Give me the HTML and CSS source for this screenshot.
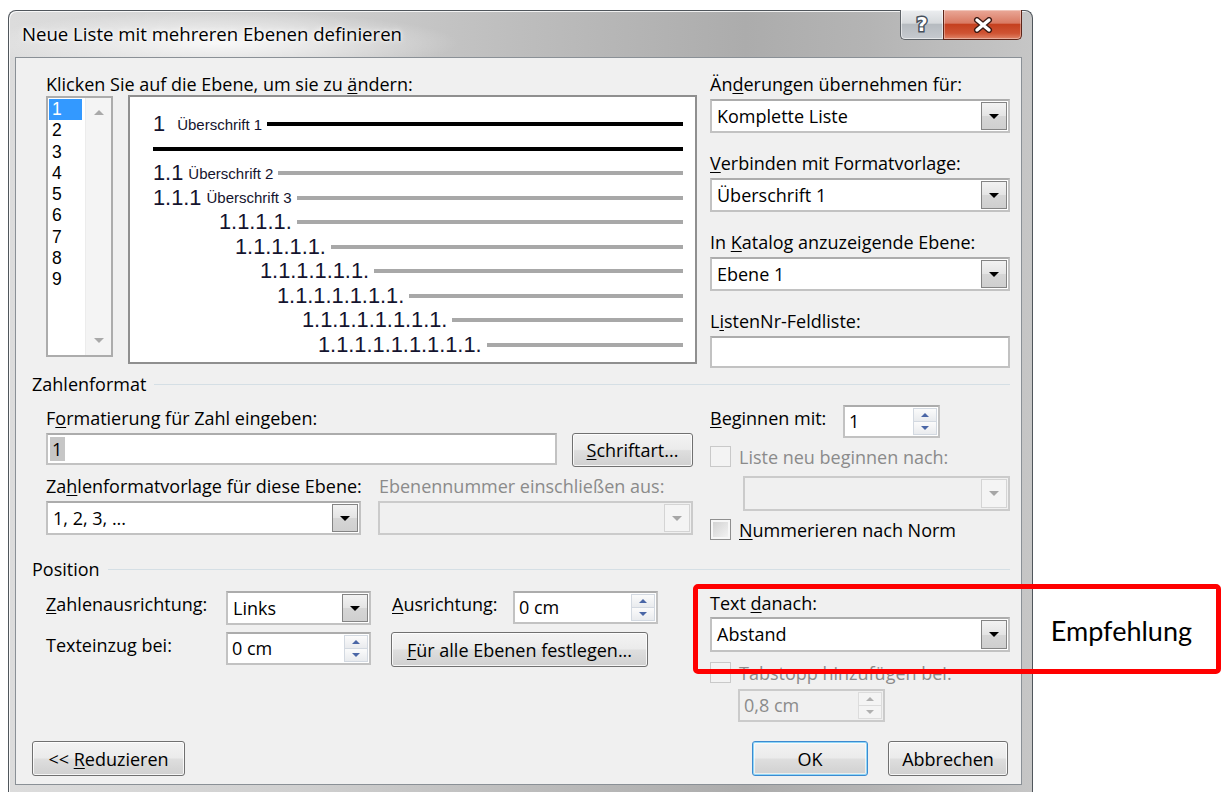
FILE: index.html
```html
<!DOCTYPE html>
<html lang="de">
<head>
<meta charset="utf-8">
<title>Neue Liste mit mehreren Ebenen definieren</title>
<link rel="stylesheet" href="styles.css">
</head>
<body>
<div class="window">
  <div class="titlebar">
    <div class="title">Neue Liste mit mehreren Ebenen definieren</div>
    <div class="caption-buttons">
      <div class="cap-btn cap-help"><span>?</span></div>
      <div class="cap-btn cap-close">
        <svg width="22" height="16" viewBox="0 0 22 16">
          <path d="M5 3 L17 13 M17 3 L5 13" stroke="#3b1a14" stroke-width="6" stroke-linecap="round"/>
          <path d="M5 3 L17 13 M17 3 L5 13" stroke="#ffffff" stroke-width="3.4" stroke-linecap="round"/>
        </svg>
      </div>
    </div>
  </div>

  <div class="client">
    <!-- level picker, preview and list-wide options -->
    <div class="top">
      <div class="levels-col">
        <div class="label">Klicken Sie auf die Ebene, um sie zu <u>ä</u>ndern:</div>
        <div class="levels-row">
          <div class="level-list">
            <ul class="level-items">
              <li class="sel">1</li><li>2</li><li>3</li><li>4</li><li>5</li><li>6</li><li>7</li><li>8</li><li>9</li>
            </ul>
            <div class="vscroll"><span class="sarrow up"></span><span class="sarrow down"></span></div>
          </div>
          <div class="preview">
            <div class="pv-row l1"><span class="pv-num">1</span><span class="pv-name first">Überschrift 1</span><span class="pv-line dark"></span></div>
            <div class="pv-row l1"><span class="pv-line dark flush"></span></div>
            <div class="pv-row l2"><span class="pv-num">1.1</span><span class="pv-name">Überschrift 2</span><span class="pv-line"></span></div>
            <div class="pv-row l3"><span class="pv-num">1.1.1</span><span class="pv-name">Überschrift 3</span><span class="pv-line"></span></div>
            <div class="pv-row l4"><span class="pv-num">1.1.1.1.</span><span class="pv-line"></span></div>
            <div class="pv-row l5"><span class="pv-num">1.1.1.1.1.</span><span class="pv-line"></span></div>
            <div class="pv-row l6"><span class="pv-num">1.1.1.1.1.1.</span><span class="pv-line"></span></div>
            <div class="pv-row l7"><span class="pv-num">1.1.1.1.1.1.1.</span><span class="pv-line"></span></div>
            <div class="pv-row l8"><span class="pv-num">1.1.1.1.1.1.1.1.</span><span class="pv-line"></span></div>
            <div class="pv-row l9"><span class="pv-num">1.1.1.1.1.1.1.1.1.</span><span class="pv-line"></span></div>
          </div>
        </div>
      </div>

      <div class="side-col">
        <div class="field">
          <div class="label">Än<u>d</u>erungen übernehmen für:</div>
          <div class="combo"><span class="combo-value">Komplette Liste</span><span class="combo-btn"><i class="tri"></i></span></div>
        </div>
        <div class="field">
          <div class="label"><u>V</u>erbinden mit Formatvorlage:</div>
          <div class="combo"><span class="combo-value">Überschrift 1</span><span class="combo-btn"><i class="tri"></i></span></div>
        </div>
        <div class="field">
          <div class="label">In <u>K</u>atalog anzuzeigende Ebene:</div>
          <div class="combo"><span class="combo-value">Ebene 1</span><span class="combo-btn"><i class="tri"></i></span></div>
        </div>
        <div class="field">
          <div class="label">L<u>i</u>stenNr-Feldliste:</div>
          <div class="textbox tall"></div>
        </div>
      </div>
    </div>

    <!-- number format group -->
    <div class="group-head nf-head"><span>Zahlenformat</span><span class="rule"></span></div>
    <div class="numfmt">
      <div class="nf-left">
        <div class="label">F<u>o</u>rmatierung für Zahl eingeben:</div>
        <div class="nf-row1">
          <div class="textbox fmt-input"><span class="hl">1</span></div>
          <button class="btn btn-font"><span><u>S</u>chriftart...</span></button>
        </div>
        <div class="nf-labels">
          <div class="label">Za<u>h</u>lenformatvorlage für diese Ebene:</div>
          <div class="label disabled">Ebenennummer einschließen aus:</div>
        </div>
        <div class="nf-row2">
          <div class="combo half"><span class="combo-value">1, 2, 3, ...</span><span class="combo-btn"><i class="tri"></i></span></div>
          <div class="combo half disabled"><span class="combo-value"></span><span class="combo-btn"><i class="tri"></i></span></div>
        </div>
      </div>

      <div class="nf-right">
        <div class="start-row">
          <div class="label start-label"><u>B</u>eginnen mit:</div>
          <div class="spin start-spin"><span class="spin-value">1</span><span class="spin-btns"><span class="sb"><i class="stri up"></i></span><span class="sb"><i class="stri down"></i></span></span></div>
        </div>
        <div class="check disabled restart"><span class="cbox"></span><span>Liste neu beginnen nach:</span></div>
        <div class="combo disabled restart-combo"><span class="combo-value"></span><span class="combo-btn"><i class="tri"></i></span></div>
        <div class="check legal"><span class="cbox"></span><span><u>N</u>ummerieren nach Norm</span></div>
      </div>
    </div>

    <!-- position group -->
    <div class="group-head pos-head"><span>Position</span><span class="rule"></span></div>
    <div class="position">
      <div class="pos-grid">
        <div class="label glabel"><u>Z</u>ahlenausrichtung:</div>
        <div class="combo align-combo"><span class="combo-value">Links</span><span class="combo-btn"><i class="tri"></i></span></div>
        <div class="label glabel col4"><u>A</u>usrichtung:</div>
        <div class="spin pos-spin"><span class="spin-value">0 cm</span><span class="spin-btns"><span class="sb"><i class="stri up"></i></span><span class="sb"><i class="stri down"></i></span></span></div>
        <div class="label glabel">Texteinzu<u>g</u> bei:</div>
        <div class="spin pos-spin"><span class="spin-value">0 cm</span><span class="spin-btns"><span class="sb"><i class="stri up"></i></span><span class="sb"><i class="stri down"></i></span></span></div>
        <button class="btn btn-all"><span><u>F</u>ür alle Ebenen festlegen...</span></button>
      </div>

      <div class="pos-right">
        <div class="label">Text <u>d</u>anach:</div>
        <div class="combo after-combo"><span class="combo-value">Abstand</span><span class="combo-btn"><i class="tri"></i></span></div>
        <div class="check disabled tabcheck"><span class="cbox"></span><span>Tabstopp hinzufügen bei:</span></div>
        <div class="spin disabled tab-spin"><span class="spin-value">0,8 cm</span><span class="spin-btns"><span class="sb"><i class="stri up"></i></span><span class="sb"><i class="stri down"></i></span></span></div>
      </div>
    </div>

    <!-- dialog buttons -->
    <div class="footer">
      <button class="btn btn-less"><span>&lt;&lt; <u>R</u>eduzieren</span></button>
      <div class="footer-right">
        <button class="btn btn-ok"><span>OK</span></button>
        <button class="btn btn-cancel"><span>Abbrechen</span></button>
      </div>
    </div>
  </div>
</div>

<div class="callout"><span class="callout-text">Empfehlung</span></div>
</body>
</html>
```

FILE: styles.css
```css
* { box-sizing: border-box; }

html, body { margin: 0; }

body {
  position: relative;
  width: 1226px;
  height: 792px;
  overflow: hidden;
  background: #ffffff;
  font-family: "Open Sans", "Noto Sans", "DejaVu Sans", sans-serif;
  font-size: 18px;
  line-height: 20px;
  color: #000;
}

u { text-decoration: underline; text-decoration-thickness: 1px; text-underline-offset: 2px; }

/* ---------- window frame ---------- */
.window {
  margin: 10px 0 0 8px;
  width: 1025px;
  height: 782px;
  padding: 0 10px 7px 6px;
  display: flex;
  flex-direction: column;
  border: 1px solid #50565c;
  border-bottom: 0;
  border-radius: 8px 8px 0 0;
  background:
    radial-gradient(ellipse 320px 42px at 210px 32px, rgba(255,255,255,.85), rgba(255,255,255,0) 75%),
    linear-gradient(to right, #dcdcdc 0%, #d0d0d0 28%, #bdbdbd 50%, #acacac 72%, #b4b4b4 84%, #c6c6c6 100%);
  box-shadow: inset 1px 1px 0 rgba(255,255,255,.8);
}

.titlebar {
  flex: none;
  height: 46px;
  display: flex;
  justify-content: space-between;
  align-items: flex-start;
}

.title {
  padding: 13px 0 0 7px;
  font-size: 18.6px;
  line-height: 20px;
  color: #000;
  text-shadow: 0 0 6px #fff, 0 0 3px #fff;
}

.caption-buttons { display: flex; margin-top: -1px; }

.cap-btn {
  height: 30px;
  display: flex;
  align-items: center;
  justify-content: center;
  border: 1px solid #5e6368;
  border-top: 0;
}

.cap-help {
  width: 43px;
  border-right: 0;
  border-radius: 0 0 0 5px;
  background: linear-gradient(#eceef0, #d6d9dc 45%, #b6bbc0 50%, #c6cacf 100%);
  box-shadow: inset 0 0 0 1px rgba(255,255,255,.55);
}

.cap-help span {
  font: bold 19px/1 "DejaVu Sans", sans-serif;
  color: #fff;
  -webkit-text-stroke: 3px #46505c;
  paint-order: stroke fill;
}

.cap-close {
  width: 79px;
  border-color: #5d2418;
  border-radius: 0 0 5px 0;
  background: linear-gradient(#eaa898, #d97a63 45%, #c5401f 50%, #cf5333 80%, #e08468 100%);
  box-shadow: inset 0 0 0 1px rgba(255,255,255,.35);
}

/* ---------- client area ---------- */
.client {
  flex: none;
  height: 728px;
  border: 1px solid #8a9096;
  background: #f0f0f0;
  display: flex;
  flex-direction: column;
}

.label { height: 20px; line-height: 20px; white-space: nowrap; }
.disabled, .label.disabled { color: #8b8b8b; }

/* ---------- top: levels + preview + options ---------- */
.top { display: flex; margin: 16px 0 0 30px; }

.levels-col { width: 651px; }

.levels-row { display: flex; margin-top: 1px; }

.level-list {
  width: 67px;
  height: 261px;
  margin-top: 1px;
  display: flex;
  border: 2px solid #acacac;
  background: #fff;
  padding: 1px 0 0 1px;
}

.level-items { list-style: none; margin: 0; padding: 0; width: 33px; }

.level-items li {
  height: 21.3px;
  line-height: 21px;
  padding-left: 3px;
  font-family: "Liberation Sans", Arial, sans-serif;
  font-size: 17.5px;
}

.level-items li.sel { background: #3399ff; color: #fff; }

.vscroll {
  margin: -1px 0 0 auto;
  width: 26px;
  height: 257px;
  background: #f4f4f4;
  border-left: 1px solid #ececec;
  display: flex;
  flex-direction: column;
  align-items: center;
  justify-content: space-between;
  padding: 12px 0 12px;
}

.sarrow { width: 0; height: 0; border-left: 5px solid transparent; border-right: 5px solid transparent; }
.sarrow.up { border-bottom: 5px solid #a9a9a9; }
.sarrow.down { border-top: 5px solid #a9a9a9; }

.preview {
  width: 569px;
  height: 269px;
  margin-left: 15px;
  border: 2px solid #8f8f8f;
  background: #fff;
  padding: 15px 12px 0 0;
}

.pv-row {
  height: 24.5px;
  display: flex;
  align-items: center;
  font-family: "Liberation Sans", Arial, sans-serif;
  color: #14142e;
}

.pv-num { font-size: 21.8px; line-height: 1; white-space: nowrap; }
.pv-name { font-size: 15px; line-height: 1; margin-left: 5px; white-space: nowrap; }
.pv-name.first { margin-left: 12px; }
.pv-line { flex: 1; height: 4px; margin-left: 5px; background: #a8a8a8; }
.pv-line.dark { background: #000; }
.pv-line.flush { margin-left: 0; }

.l1, .l2, .l3 { padding-left: 23px; }
.l4 { padding-left: 89px; }
.l5 { padding-left: 105px; }
.l6 { padding-left: 130px; }
.l7 { padding-left: 147px; }
.l8 { padding-left: 172px; }
.l9 { padding-left: 188px; }

.side-col { width: 300px; margin-left: 13px; }
.field + .field { margin-top: 20px; }
.field .label + * { margin-top: 5px; }

/* ---------- controls ---------- */
.combo {
  height: 34px;
  display: flex;
  border: 2px solid #c2c2c2;
  border-top-color: #acacac;
  background: #fff;
}

.combo-value { flex: 1; padding-left: 5px; line-height: 30px; white-space: nowrap; }

.combo-btn {
  width: 26px;
  margin: 1px 1px 1px 0;
  border: 1px solid #848484;
  background: linear-gradient(#f2f2f2, #e4e4e4 50%, #d6d6d6 51%, #cfcfcf);
  display: flex;
  align-items: center;
  justify-content: center;
}

.tri { width: 0; height: 0; border-left: 5px solid transparent; border-right: 5px solid transparent; border-top: 5px solid #000; }

.combo.disabled { background: #f0f0f0; border-color: #cbcbcb; }
.combo.disabled .combo-btn { border-color: #d4d4d4; background: #f4f4f4; }
.combo.disabled .tri { border-top-color: #a6a6a6; }

.textbox {
  height: 32px;
  border: 2px solid #c2c2c2;
  border-top-color: #acacac;
  background: #fff;
}

.spin {
  display: flex;
  border: 2px solid #c2c2c2;
  border-top-color: #acacac;
  background: #fff;
}

.spin-value { flex: 1; padding-left: 4px; line-height: 29px; white-space: nowrap; }

.spin-btns { width: 24px; display: flex; flex-direction: column; margin: 1px; }

.sb {
  flex: 1;
  display: flex;
  align-items: center;
  justify-content: center;
  border: 1px solid #d3d9e1;
  background: linear-gradient(#fbfbfb, #e9ebee);
}
.sb + .sb { border-top: 0; }

.stri { width: 0; height: 0; border-left: 4px solid transparent; border-right: 4px solid transparent; }
.stri.up { border-bottom: 4px solid #4a66a6; }
.stri.down { border-top: 4px solid #4a66a6; }

.spin.disabled { background: #f0f0f0; border-color: #cbcbcb; }
.spin.disabled .sb { border-color: #dcdcdc; background: #f4f4f4; }
.spin.disabled .stri.up { border-bottom-color: #b0b0b0; }
.spin.disabled .stri.down { border-top-color: #b0b0b0; }

.check { display: flex; align-items: center; height: 21px; white-space: nowrap; }

.cbox {
  width: 21px;
  height: 21px;
  margin-right: 8px;
  border: 1px solid #8f8f8f;
  background: linear-gradient(135deg, #cfcfcf, #f6f6f6);
  box-shadow: inset 0 0 0 2px #f7f7f7;
}

.check.disabled .cbox { border-color: #c9c9c9; background: #f3f3f3; box-shadow: none; }

.btn {
  font: inherit;
  color: #000;
  height: 35px;
  padding: 0;
  border: 1px solid #707070;
  border-radius: 3px;
  background: linear-gradient(#f3f3f3 0%, #ebebeb 48%, #dedede 52%, #d0d0d0 100%);
  box-shadow: inset 0 0 0 1px rgba(255,255,255,.8);
  display: flex;
  align-items: center;
  justify-content: center;
  white-space: nowrap;
}

/* ---------- group headers ---------- */
.group-head {
  display: flex;
  align-items: center;
  height: 20px;
  margin: 0 11px 0 16px;
}
.group-head .rule { flex: 1; height: 1px; margin-left: 8px; background: #d5dfe5; }
.nf-head { margin-top: 6px; }
.pos-head { margin-top: 19px; }

/* ---------- number format ---------- */
.numfmt { display: flex; }

.nf-left { width: 647px; margin-left: 30px; padding-top: 14px; }

.nf-row1 { display: flex; align-items: flex-start; margin-top: 5px; }

.fmt-input { width: 511px; padding: 2px 0 0 2px; }
.hl { display: inline-block; height: 24px; line-height: 24px; padding: 0 3px 0 2px; background: #c6c6c6; }

.btn-font { width: 121px; height: 34px; margin-left: 15px; }

.nf-labels { display: flex; margin-top: 9px; }
.nf-labels .label:first-child { width: 333px; }

.nf-row2 { display: flex; gap: 17px; margin-top: 5px; }
.combo.half { width: 315px; }

.nf-right { width: 300px; margin-left: 17px; padding-top: 11px; }

.start-row { display: flex; }
.start-label { width: 133px; margin-top: 3px; }
.start-spin { width: 97px; height: 33px; }

.restart { margin-top: 8px; }
.restart-combo { margin: 9px 0 0 33px; height: 35px; }
.legal { margin-top: 8px; }

/* ---------- position ---------- */
.position { display: flex; }

.pos-grid {
  margin: 12px 0 0 30px;
  display: grid;
  grid-template-columns: 180px 145px 21px 121px 145px;
  grid-template-rows: 34px 35px;
  row-gap: 7px;
  align-items: start;
}

.glabel { margin-top: 3px; }
.col4 { grid-column: 4; }
.align-combo { grid-column: 2; }
.pos-spin { height: 33px; }
.btn-all { grid-column: 4 / span 2; width: 257px; margin-left: -1px; }

.pos-right { width: 300px; margin-left: 52px; padding-top: 14px; }
.after-combo { margin-top: 4px; height: 35px; }
.tabcheck { margin-top: 10px; }
.tab-spin { width: 147px; height: 33px; margin: 6px 0 0 28px; }

/* ---------- footer ---------- */
.footer {
  display: flex;
  justify-content: space-between;
  margin: 19px 13px 0 16px;
}

.footer-right { display: flex; gap: 20px; }

.btn-less { width: 153px; }
.btn-ok {
  width: 116px;
  border-color: #3c8ad0;
  box-shadow: inset 0 0 0 1px #8fd6f7, inset 0 0 0 2px rgba(255,255,255,.6);
}
.btn-cancel { width: 120px; }

/* ---------- annotation ---------- */
.callout {
  position: absolute;
  left: 693px;
  top: 584px;
  width: 528px;
  height: 90px;
  border: 5px solid #ff0000;
  border-radius: 5px;
  display: flex;
  align-items: center;
  justify-content: flex-end;
  padding: 4px 24px 0 0;
}

.callout-text {
  font-family: "Lato", "Open Sans", sans-serif;
  font-size: 27px;
  color: #000;
}
```
